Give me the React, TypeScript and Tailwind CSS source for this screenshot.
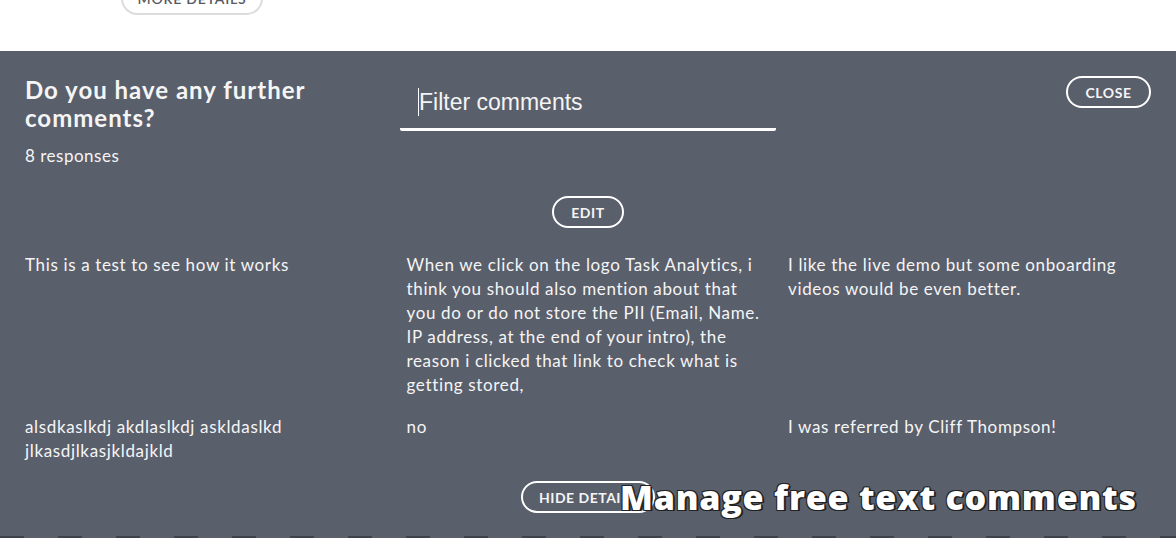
import React from "react";

const comments: string[] = [
  "This is a test to see how it works",
  "When we click on the logo Task Analytics, i think you should also mention about that you do or do not store the PII (Email, Name. IP address, at the end of your intro), the reason i clicked that link to check what is getting stored,",
  "I like the live demo but some onboarding videos would be even better.",
  "alsdkaslkdj akdlaslkdj askldaslkd jlkasdjlkasjkldajkld",
  "no",
  "I was referred by Cliff Thompson!",
];

export default function App() {
  return (
    <div className="w-[1176px] h-[538px] overflow-hidden bg-white font-['Lato','Noto_Sans',sans-serif] relative">
      <div className="h-[51px] bg-white pl-[121px] flex items-start">
        <div className="mt-[-18px] w-[142px] h-[33px] rounded-full border-2 border-[#dcdcdc] flex items-center justify-center text-[14px] tracking-[0.8px] text-[#555a66] font-semibold">
          MORE DETAILS
        </div>
      </div>
      <div className="bg-[#5a5f6c] h-[487px] px-[25px] pt-[25px] text-[#f5f5f5]">
        <div className="flex items-start">
          <div className="w-[375px]">
            <h2 className="text-[24px] leading-[28px] font-bold tracking-[1px]">
              Do you have any further comments?
            </h2>
            <div className="mt-[12px] text-[17px] leading-[24px] tracking-[0.5px]">8 responses</div>
          </div>
          <div className="w-[376px] h-[55px] border-b-[3px] border-white rounded-b-[2px] pl-[18px] pt-[12px] flex items-start">
            <span className="w-px h-[28px] bg-white"></span>
            <span className="font-['Liberation_Sans',Arial,sans-serif] text-[23px] leading-[28px] text-[#f4f4f4]">
              Filter comments
            </span>
          </div>
          <div className="flex-1 flex justify-end">
            <button className="w-[85px] h-[32px] rounded-full border-2 border-white text-[14px] font-bold tracking-[0.6px] flex items-center justify-center">
              CLOSE
            </button>
          </div>
        </div>
        <div className="flex justify-center mt-[28px]">
          <button className="w-[72px] h-[32px] rounded-full border-2 border-white text-[14px] font-bold tracking-[0.6px] flex items-center justify-center">
            EDIT
          </button>
        </div>
        <div className="grid grid-cols-3 gap-x-[18.5px] gap-y-[18px] mt-[25px] text-[17px] leading-[24px] tracking-[0.65px]">
          {comments.map((c, i) => (
            <p key={i} className="w-[363px]">
              {c}
            </p>
          ))}
        </div>
        <div className="flex justify-center mt-[18px]">
          <button className="w-[134px] h-[32px] rounded-full border-2 border-white text-[14px] font-bold tracking-[0.5px] flex items-center justify-center whitespace-nowrap">
            HIDE DETAILS
          </button>
        </div>
      </div>
      <div className="absolute left-[620px] top-[476px] font-['Open_Sans',sans-serif] text-[34px] leading-[42px] font-extrabold text-white whitespace-nowrap tracking-[0.8px] [text-shadow:-1px_-1px_0_#222,1px_-1px_0_#222,-1px_1px_0_#222,1px_1px_0_#222,2px_1px_0_#222]">
        Manage free text comments
      </div>
      <div className="absolute left-0 bottom-0 w-full h-[2px] bg-[repeating-linear-gradient(90deg,#2c2f38_0px,#2c2f38_24px,transparent_24px,transparent_58px)] opacity-60"></div>
    </div>
  );
}
